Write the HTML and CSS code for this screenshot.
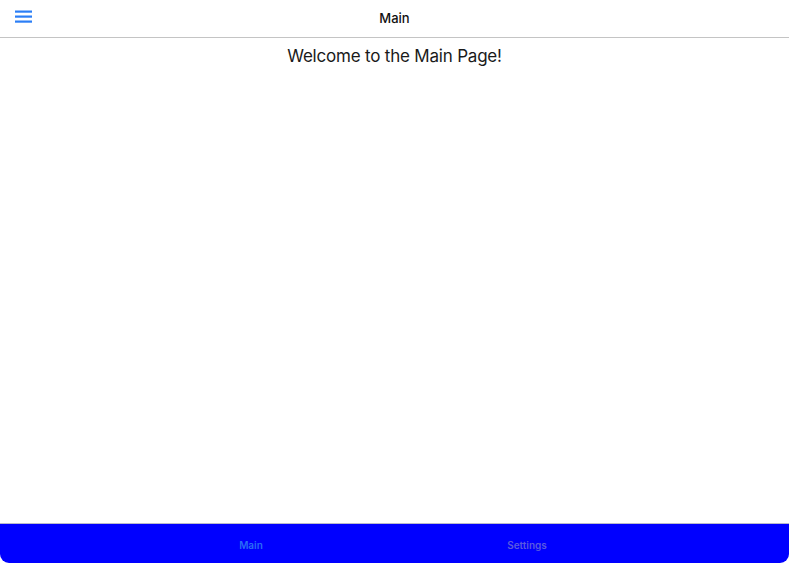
FILE: index.html
```html
<!DOCTYPE html>
<html>
<head>
<meta charset="utf-8">
<link rel="stylesheet" href="styles.css">
</head>
<body>
<div class="app">
  <header class="topbar">
    <button class="menu-btn" aria-label="Menu">
      <svg width="18" height="14" viewBox="0 0 18 14"><rect x="0" y="0.5" width="17" height="2.2" fill="#2b7ef6"/><rect x="0" y="5.5" width="17" height="2.2" fill="#2b7ef6"/><rect x="0" y="10.5" width="17" height="2.2" fill="#2b7ef6"/></svg>
    </button>
    <div class="title">Main</div>
  </header>
  <main class="content">
    <h1 class="welcome">Welcome to the Main Page!</h1>
  </main>
  <nav class="tabbar">
    <div class="tab active">Main</div>
    <div class="tab">Settings</div>
  </nav>
</div>
</body>
</html>
```

FILE: styles.css
```css
html, body {
  margin: 0;
  padding: 0;
  height: 100%;
  background: #fff;
  font-family: Inter, "Liberation Sans", sans-serif;
}
.app {
  display: flex;
  flex-direction: column;
  height: 563px;
}
.topbar {
  position: relative;
  height: 35px;
  padding-bottom: 2px;
  border-bottom: 1px solid #c4c4c4;
  display: flex;
  align-items: center;
  justify-content: center;
  flex-shrink: 0;
}
.menu-btn {
  position: absolute;
  left: 15px;
  top: 10px;
  padding: 0;
  border: 0;
  background: none;
  display: flex;
}
.title {
  font-size: 13px;
  font-weight: 500;
  color: #111;
}
.content {
  flex: 1;
  display: flex;
  flex-direction: column;
  align-items: center;
}
.welcome {
  margin: 8px 0 0;
  font-size: 17px;
  font-weight: 400;
  color: #1a1a1a;
  letter-spacing: -0.2px;
}
.tabbar {
  height: 39px;
  flex-shrink: 0;
  background: #0000ff;
  border-top: 1px solid #b8b8cc;
  border-radius: 0 0 9px 9px;
  display: flex;
  justify-content: center;
  align-items: center;
  padding-right: 11px;
}
.tab {
  width: 276px;
  text-align: center;
  font-size: 10px;
  font-weight: 600;
  color: #5a5ae0;
  padding-top: 2px;
}
.tab.active {
  color: #2a6cf5;
}
```
